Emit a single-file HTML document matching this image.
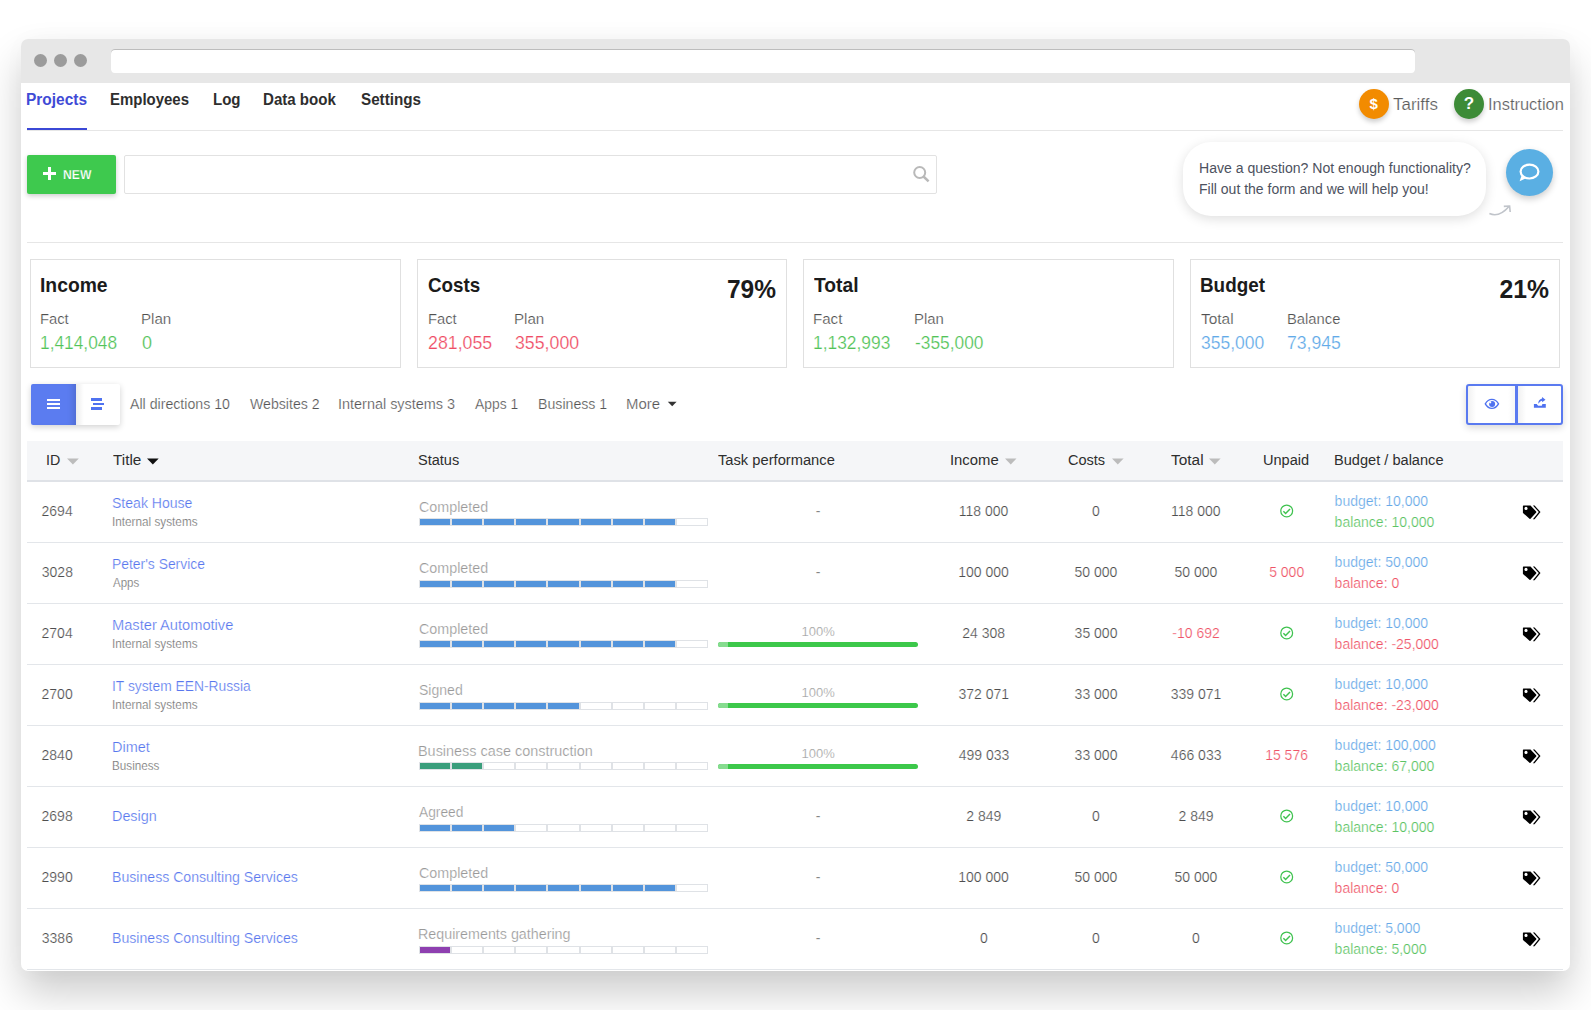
<!DOCTYPE html>
<html><head><meta charset="utf-8"><style>
html,body{margin:0;padding:0;background:#fff;width:1591px;height:1010px;overflow:hidden;position:relative;}
.t{position:absolute;white-space:nowrap;font-family:"Liberation Sans", sans-serif;}
.r{position:absolute;}
.lt{-webkit-text-stroke:0.22px #fff;}
</style></head><body>
<div class="r" style="left:21px;top:39px;width:1549px;height:932px;background:#fff;border-radius:7px;box-shadow:0 22px 40px rgba(0,0,0,0.2), 0 0 24px rgba(0,0,0,0.025);"></div>
<div class="r" style="left:21px;top:39px;width:1549px;height:44px;background:#e7e7e7;border-radius:7px 7px 0 0;"></div>
<div class="r" style="left:34.1px;top:54.2px;width:13.0px;height:13.0px;background:#9b9b9b;border-radius:50%;"></div>
<div class="r" style="left:54.1px;top:54.2px;width:12.999999999999993px;height:13.0px;background:#9b9b9b;border-radius:50%;"></div>
<div class="r" style="left:74.1px;top:54.2px;width:13.0px;height:13.0px;background:#9b9b9b;border-radius:50%;"></div>
<div class="r" style="left:111px;top:49px;width:1304px;height:24px;background:#fff;border-radius:4px;box-shadow:inset 0 1px 0 #bdbdbd;"></div>
<div class="t" style="left:26.13px;top:91.66px;font-size:16px;line-height:16px;color:#3f4bd6;font-weight:bold;transform:scaleX(0.9659);transform-origin:0 0;">Projects</div>
<div class="t" style="left:110.06px;top:91.66px;font-size:16px;line-height:16px;color:#2e2e2e;font-weight:bold;transform:scaleX(0.9353);transform-origin:0 0;">Employees</div>
<div class="t" style="left:213.06px;top:91.66px;font-size:16px;line-height:16px;color:#2e2e2e;font-weight:bold;transform:scaleX(0.9394);transform-origin:0 0;">Log</div>
<div class="t" style="left:263.26px;top:91.66px;font-size:16px;line-height:16px;color:#2e2e2e;font-weight:bold;transform:scaleX(0.9416);transform-origin:0 0;">Data book</div>
<div class="t" style="left:360.52px;top:91.66px;font-size:16px;line-height:16px;color:#2e2e2e;font-weight:bold;transform:scaleX(0.9516);transform-origin:0 0;">Settings</div>
<div class="r" style="left:27px;top:130px;width:1536px;height:1px;background:#e6e6e6;"></div>
<div class="r" style="left:27px;top:127.5px;width:60px;height:2.5px;background:#3b48d6;"></div>
<div class="r" style="left:1359px;top:89px;width:30px;height:30px;background:#f28b00;border-radius:50%;box-shadow:0 3px 5px rgba(0,0,0,0.2);"></div>
<div class="t" style="left:1073.75px;width:600px;text-align:center;top:95.50px;font-size:15px;line-height:15px;color:#fff;font-weight:bold;">$</div>
<div class="t lt" style="left:1393.14px;top:95.73px;font-size:16.5px;line-height:16.5px;color:#5c5c5c;font-weight:normal;transform:scaleX(1.0292);transform-origin:0 0;">Tariffs</div>
<div class="r" style="left:1454px;top:89px;width:30px;height:30px;background:#3d8b37;border-radius:50%;box-shadow:0 3px 5px rgba(0,0,0,0.2);"></div>
<div class="t" style="left:1169.07px;width:600px;text-align:center;top:95.41px;font-size:17px;line-height:17px;color:#fff;font-weight:bold;">?</div>
<div class="t lt" style="left:1487.61px;top:95.73px;font-size:16.5px;line-height:16.5px;color:#5c5c5c;font-weight:normal;transform:scaleX(0.9959);transform-origin:0 0;">Instruction</div>
<div class="r" style="left:27px;top:155px;width:89px;height:39px;background:#3ec94e;border-radius:2px;box-shadow:0 2px 5px rgba(0,0,0,0.2);"></div>
<div class="r" style="left:42.6px;top:172.3px;width:13.100000000000001px;height:3.0px;background:#fff;"></div>
<div class="r" style="left:47.6px;top:167.3px;width:3.0px;height:13.0px;background:#fff;"></div>
<div class="t" style="left:63.30px;top:168.30px;font-size:13px;line-height:13px;color:#fff;font-weight:bold;transform:scaleX(0.9356);transform-origin:0 0;-webkit-text-stroke:0.25px #3ec94e;">NEW</div>
<div class="r" style="left:124.4px;top:155.2px;width:812.4px;height:38.70000000000002px;border:1px solid #e2e2e2;border-radius:2px;box-sizing:border-box;background:#fff;"></div>
<svg class="r" style="left:910px;top:163px" width="22" height="22" viewBox="910 163 22 22"><circle cx="919.7" cy="172.5" r="5.5" fill="none" stroke="#b9b9b9" stroke-width="2"/><line x1="923.5" y1="176.5" x2="928.6" y2="181.3" stroke="#b9b9b9" stroke-width="2.5"/></svg>
<div class="r" style="left:1183px;top:142px;width:303px;height:74px;background:#fff;border-radius:28px;box-shadow:0 3px 12px rgba(0,0,0,0.13);"></div>
<div class="t" style="left:1199.05px;top:161.35px;font-size:14px;line-height:14px;color:#4d5260;font-weight:normal;transform:scaleX(1.0037);transform-origin:0 0;">Have a question? Not enough functionality?</div>
<div class="t" style="left:1199.05px;top:182.25px;font-size:14px;line-height:14px;color:#4d5260;font-weight:normal;">Fill out the form and we will help you!</div>
<div class="r" style="left:1505.8px;top:148.9px;width:47.299999999999955px;height:47.099999999999994px;background:#5aafe3;border-radius:50%;box-shadow:0 3px 7px rgba(0,0,0,0.2);"></div>
<svg class="r" style="left:1510px;top:155px" width="40" height="35" viewBox="1510 155 40 35"><ellipse cx="1529.5" cy="171.6" rx="8.9" ry="6.9" fill="none" stroke="#fff" stroke-width="2.2"/><path d="M1521.6 175.6 L1519.6 181.2 L1526.2 178.2 Z" fill="#fff"/></svg>
<svg class="r" style="left:1485px;top:200px" width="30" height="20" viewBox="1485 200 30 20"><path d="M1489.4 213.5 Q1499 218 1509.2 206.2" fill="none" stroke="#c0c4ca" stroke-width="1.6"/><path d="M1503.8 206.4 L1509.6 206 L1510.2 212" fill="none" stroke="#c0c4ca" stroke-width="1.6"/></svg>
<div class="r" style="left:27px;top:242px;width:1536px;height:1px;background:#e6e6e6;"></div>
<div class="r" style="left:30px;top:259.3px;width:371px;height:108.69999999999999px;border:1px solid #e0e0e0;box-sizing:border-box;"></div>
<div class="t" style="left:40.32px;top:274.55px;font-size:20.5px;line-height:20.5px;color:#1b1b1b;font-weight:bold;transform:scaleX(0.9419);transform-origin:0 0;">Income</div>
<div class="t lt" style="left:40.17px;top:311.20px;font-size:15px;line-height:15px;color:#505050;font-weight:normal;transform:scaleX(0.9838);transform-origin:0 0;">Fact</div>
<div class="t lt" style="left:40.20px;top:333.56px;font-size:18px;line-height:18px;color:#52c358;font-weight:normal;transform:scaleX(0.9628);transform-origin:0 0;">1,414,048</div>
<div class="t lt" style="left:141.44px;top:311.20px;font-size:15px;line-height:15px;color:#505050;font-weight:normal;transform:scaleX(1.0090);transform-origin:0 0;">Plan</div>
<div class="t lt" style="left:141.95px;top:333.56px;font-size:18px;line-height:18px;color:#52c358;font-weight:normal;">0</div>
<div class="r" style="left:417.4px;top:259.3px;width:369.6px;height:108.69999999999999px;border:1px solid #e0e0e0;box-sizing:border-box;"></div>
<div class="t" style="left:428.21px;top:274.55px;font-size:20.5px;line-height:20.5px;color:#1b1b1b;font-weight:bold;transform:scaleX(0.9176);transform-origin:0 0;">Costs</div>
<div class="t" style="left:176.25px;width:600px;text-align:right;top:276.39px;font-size:26px;line-height:26px;color:#1b1b1b;font-weight:bold;transform:scaleX(0.9413);transform-origin:100% 0;">79%</div>
<div class="t lt" style="left:427.57px;top:311.20px;font-size:15px;line-height:15px;color:#505050;font-weight:normal;transform:scaleX(0.9838);transform-origin:0 0;">Fact</div>
<div class="t lt" style="left:427.81px;top:333.56px;font-size:18px;line-height:18px;color:#ef4c64;font-weight:normal;transform:scaleX(0.9866);transform-origin:0 0;">281,055</div>
<div class="t lt" style="left:514.14px;top:311.20px;font-size:15px;line-height:15px;color:#505050;font-weight:normal;transform:scaleX(1.0090);transform-origin:0 0;">Plan</div>
<div class="t lt" style="left:514.66px;top:333.56px;font-size:18px;line-height:18px;color:#ef4c64;font-weight:normal;transform:scaleX(0.9858);transform-origin:0 0;">355,000</div>
<div class="r" style="left:803px;top:259.3px;width:371px;height:108.69999999999999px;border:1px solid #e0e0e0;box-sizing:border-box;"></div>
<div class="t" style="left:814.27px;top:274.55px;font-size:20.5px;line-height:20.5px;color:#1b1b1b;font-weight:bold;transform:scaleX(0.9399);transform-origin:0 0;">Total</div>
<div class="t lt" style="left:813.14px;top:311.20px;font-size:15px;line-height:15px;color:#505050;font-weight:normal;transform:scaleX(1.0054);transform-origin:0 0;">Fact</div>
<div class="t lt" style="left:813.19px;top:333.56px;font-size:18px;line-height:18px;color:#52c358;font-weight:normal;transform:scaleX(0.9654);transform-origin:0 0;">1,132,993</div>
<div class="t lt" style="left:914.16px;top:311.20px;font-size:15px;line-height:15px;color:#505050;font-weight:normal;transform:scaleX(0.9946);transform-origin:0 0;">Plan</div>
<div class="t lt" style="left:914.68px;top:333.56px;font-size:18px;line-height:18px;color:#52c358;font-weight:normal;transform:scaleX(0.9626);transform-origin:0 0;">-355,000</div>
<div class="r" style="left:1190px;top:259.3px;width:370px;height:108.69999999999999px;border:1px solid #e0e0e0;box-sizing:border-box;"></div>
<div class="t" style="left:1200.35px;top:274.55px;font-size:20.5px;line-height:20.5px;color:#1b1b1b;font-weight:bold;transform:scaleX(0.9203);transform-origin:0 0;">Budget</div>
<div class="t" style="left:949.26px;width:600px;text-align:right;top:276.39px;font-size:26px;line-height:26px;color:#1b1b1b;font-weight:bold;transform:scaleX(0.9512);transform-origin:100% 0;">21%</div>
<div class="t lt" style="left:1201.14px;top:311.20px;font-size:15px;line-height:15px;color:#505050;font-weight:normal;transform:scaleX(1.0295);transform-origin:0 0;">Total</div>
<div class="t lt" style="left:1200.67px;top:333.56px;font-size:18px;line-height:18px;color:#62aae8;font-weight:normal;transform:scaleX(0.9701);transform-origin:0 0;">355,000</div>
<div class="t lt" style="left:1286.87px;top:311.20px;font-size:15px;line-height:15px;color:#505050;font-weight:normal;transform:scaleX(0.9856);transform-origin:0 0;">Balance</div>
<div class="t lt" style="left:1287.12px;top:333.56px;font-size:18px;line-height:18px;color:#62aae8;font-weight:normal;transform:scaleX(0.9784);transform-origin:0 0;">73,945</div>
<div class="r" style="left:31px;top:384px;width:89px;height:41px;background:#fff;border-radius:2px;box-shadow:0 2px 6px rgba(0,0,0,0.18);"></div>
<div class="r" style="left:31px;top:384px;width:45px;height:41px;background:#5b7cf0;border-radius:2px 0 0 2px;box-shadow:inset -7px 0 6px -4px rgba(0,0,0,0.13);"></div>
<div class="r" style="left:76px;top:384px;width:8px;height:41px;background:linear-gradient(to right, rgba(0,0,0,0.07), rgba(0,0,0,0));"></div>
<div class="r" style="left:47px;top:398.8px;width:2.6000000000000014px;height:2.3999999999999773px;background:#fff;"></div>
<div class="r" style="left:50.2px;top:398.8px;width:10.299999999999997px;height:2.3999999999999773px;background:#fff;"></div>
<div class="r" style="left:47px;top:403px;width:2.6000000000000014px;height:2.3999999999999773px;background:#fff;"></div>
<div class="r" style="left:50.2px;top:403px;width:10.299999999999997px;height:2.3999999999999773px;background:#fff;"></div>
<div class="r" style="left:47px;top:407.1px;width:2.6000000000000014px;height:2.3999999999999773px;background:#fff;"></div>
<div class="r" style="left:50.2px;top:407.1px;width:10.299999999999997px;height:2.3999999999999773px;background:#fff;"></div>
<div class="r" style="left:91px;top:398.3px;width:11.299999999999997px;height:2.5px;background:#4f72f0;"></div>
<div class="r" style="left:92.8px;top:403px;width:11.200000000000003px;height:2.3999999999999773px;background:#4f72f0;"></div>
<div class="r" style="left:91px;top:407.3px;width:11.299999999999997px;height:2.5px;background:#4f72f0;"></div>
<div class="t lt" style="left:130.10px;top:397.15px;font-size:14px;line-height:14px;color:#545454;font-weight:normal;transform:scaleX(1.0107);transform-origin:0 0;">All directions 10</div>
<div class="t lt" style="left:250.15px;top:397.15px;font-size:14px;line-height:14px;color:#545454;font-weight:normal;transform:scaleX(1.0088);transform-origin:0 0;">Websites 2</div>
<div class="t lt" style="left:338.31px;top:397.15px;font-size:14px;line-height:14px;color:#545454;font-weight:normal;transform:scaleX(1.0309);transform-origin:0 0;">Internal systems 3</div>
<div class="t lt" style="left:475.40px;top:397.15px;font-size:14px;line-height:14px;color:#545454;font-weight:normal;transform:scaleX(0.9907);transform-origin:0 0;">Apps 1</div>
<div class="t lt" style="left:538.34px;top:397.15px;font-size:14px;line-height:14px;color:#545454;font-weight:normal;transform:scaleX(1.0105);transform-origin:0 0;">Business 1</div>
<div class="t lt" style="left:626.47px;top:397.15px;font-size:14px;line-height:14px;color:#545454;font-weight:normal;transform:scaleX(1.0667);transform-origin:0 0;">More</div>
<svg class="r" style="left:667px;top:401px" width="11" height="6" viewBox="0 0 11 6"><path d="M0.8 0.8 L9.6 0.8 L5.2 5.2 Z" fill="#333"/></svg>
<div class="r" style="left:1466px;top:384px;width:97px;height:41px;border:2px solid #5a7af0;border-radius:3px;box-sizing:border-box;box-shadow:0 3px 7px rgba(0,0,0,0.15);background:#fff;"></div>
<div class="r" style="left:1468px;top:386px;width:8px;height:37px;background:linear-gradient(to right, rgba(0,0,0,0.06), rgba(0,0,0,0));"></div>
<div class="r" style="left:1517.8px;top:386px;width:8.0px;height:37px;background:linear-gradient(to right, rgba(0,0,0,0.06), rgba(0,0,0,0));"></div>
<div class="r" style="left:1508px;top:386px;width:7.2000000000000455px;height:37px;background:linear-gradient(to left, rgba(0,0,0,0.035), rgba(0,0,0,0));"></div>
<div class="r" style="left:1515.2px;top:384px;width:2.599999999999909px;height:41px;background:#5a7af0;"></div>
<svg class="r" style="left:1482px;top:396px" width="20" height="16" viewBox="1482 396 20 16"><path d="M1485.3 403.8 C1487.1 400.6 1489.5 399.4 1491.9 399.4 C1494.3 399.4 1496.7 400.6 1498.5 403.8 C1496.7 407 1494.3 408.3 1491.9 408.3 C1489.5 408.3 1487.1 407 1485.3 403.8 Z" fill="none" stroke="#4f72f0" stroke-width="1.35"/><circle cx="1492.1" cy="404.1" r="3" fill="#4f72f0"/><circle cx="1490.2" cy="402.3" r="1.1" fill="#fff"/></svg>
<svg class="r" style="left:1530px;top:394px" width="20" height="16" viewBox="1530 394 20 16"><path d="M1533.9 403.9 L1536.7 403.9 L1538.1 405.8 L1541.8 405.8 L1542.4 403.9 L1545.8 403.9 L1545.8 407.8 L1533.9 407.8 Z" fill="#4f72f0"/><path d="M1538.2 403.8 C1538.3 401 1539.5 399 1542.1 398.5 L1542.1 396.9 L1545.5 399.8 L1542.1 402.3 L1542.1 400.7 C1540.6 400.9 1539.5 402 1538.2 403.8 Z" fill="#4f72f0"/></svg>
<div class="r" style="left:27px;top:441px;width:1536px;height:39px;background:#f5f6f8;"></div>
<div class="r" style="left:27px;top:480px;width:1536px;height:2px;background:#dfe2e7;"></div>
<div class="t" style="left:45.93px;top:453.15px;font-size:14px;line-height:14px;color:#2e2e2e;font-weight:normal;transform:scaleX(1.0167);transform-origin:0 0;">ID</div>
<div class="t" style="left:112.83px;top:453.15px;font-size:14px;line-height:14px;color:#2e2e2e;font-weight:normal;transform:scaleX(1.0920);transform-origin:0 0;">Title</div>
<div class="t" style="left:418.22px;top:453.15px;font-size:14px;line-height:14px;color:#2e2e2e;font-weight:normal;transform:scaleX(1.0390);transform-origin:0 0;">Status</div>
<div class="t" style="left:717.74px;top:453.15px;font-size:14px;line-height:14px;color:#2e2e2e;font-weight:normal;transform:scaleX(1.0498);transform-origin:0 0;">Task performance</div>
<div class="t" style="left:949.58px;top:453.15px;font-size:14px;line-height:14px;color:#2e2e2e;font-weight:normal;transform:scaleX(1.0591);transform-origin:0 0;">Income</div>
<div class="t" style="left:1068.02px;top:453.15px;font-size:14px;line-height:14px;color:#2e2e2e;font-weight:normal;transform:scaleX(1.0377);transform-origin:0 0;">Costs</div>
<div class="t" style="left:1171.12px;top:453.15px;font-size:14px;line-height:14px;color:#2e2e2e;font-weight:normal;transform:scaleX(1.1009);transform-origin:0 0;">Total</div>
<div class="t" style="left:1263.46px;top:453.15px;font-size:14px;line-height:14px;color:#2e2e2e;font-weight:normal;transform:scaleX(1.0400);transform-origin:0 0;">Unpaid</div>
<div class="t" style="left:1334.20px;top:453.15px;font-size:14px;line-height:14px;color:#2e2e2e;font-weight:normal;transform:scaleX(1.0421);transform-origin:0 0;">Budget / balance</div>
<svg class="r" style="left:67px;top:457.5px" width="11.8" height="7" viewBox="0 0 11.8 7"><path d="M0 0.5 L11.8 0.5 L5.90 6.5 Z" fill="#bcbcbc"/></svg>
<svg class="r" style="left:147.2px;top:457.5px" width="11.7" height="7" viewBox="0 0 11.7 7"><path d="M0 0.5 L11.7 0.5 L5.85 6.5 Z" fill="#111"/></svg>
<svg class="r" style="left:1005.4px;top:457.5px" width="11.5" height="7" viewBox="0 0 11.5 7"><path d="M0 0.5 L11.5 0.5 L5.75 6.5 Z" fill="#bcbcbc"/></svg>
<svg class="r" style="left:1112px;top:457.5px" width="11.6" height="7" viewBox="0 0 11.6 7"><path d="M0 0.5 L11.6 0.5 L5.80 6.5 Z" fill="#bcbcbc"/></svg>
<svg class="r" style="left:1209.2px;top:457.5px" width="11.6" height="7" viewBox="0 0 11.6 7"><path d="M0 0.5 L11.6 0.5 L5.80 6.5 Z" fill="#bcbcbc"/></svg>
<div class="r" style="left:27px;top:542px;width:1536px;height:1px;background:#e3e6ea;"></div>
<div class="t lt" style="left:41.55px;top:503.95px;font-size:14px;line-height:14px;color:#4e4e4e;font-weight:normal;">2694</div>
<div class="t lt" style="left:112.35px;top:495.55px;font-size:14px;line-height:14px;color:#5877ee;font-weight:normal;transform:scaleX(1.0032);transform-origin:0 0;">Steak House</div>
<div class="t lt" style="left:112.12px;top:515.64px;font-size:12px;line-height:12px;color:#6c6c6c;font-weight:normal;transform:scaleX(0.9791);transform-origin:0 0;">Internal systems</div>
<div class="t lt" style="left:418.63px;top:499.95px;font-size:14px;line-height:14px;color:#999999;font-weight:normal;transform:scaleX(1.0227);transform-origin:0 0;">Completed</div>
<div class="r" style="left:419px;top:518px;width:32px;height:8px;border:1px solid #dfe2e6;box-sizing:border-box;background:#5394db;"></div>
<div class="r" style="left:451px;top:518px;width:32px;height:8px;border:1px solid #dfe2e6;box-sizing:border-box;background:#5394db;"></div>
<div class="r" style="left:483px;top:518px;width:32px;height:8px;border:1px solid #dfe2e6;box-sizing:border-box;background:#5394db;"></div>
<div class="r" style="left:515px;top:518px;width:32px;height:8px;border:1px solid #dfe2e6;box-sizing:border-box;background:#5394db;"></div>
<div class="r" style="left:547px;top:518px;width:33px;height:8px;border:1px solid #dfe2e6;box-sizing:border-box;background:#5394db;"></div>
<div class="r" style="left:580px;top:518px;width:32px;height:8px;border:1px solid #dfe2e6;box-sizing:border-box;background:#5394db;"></div>
<div class="r" style="left:612px;top:518px;width:32px;height:8px;border:1px solid #dfe2e6;box-sizing:border-box;background:#5394db;"></div>
<div class="r" style="left:644px;top:518px;width:32px;height:8px;border:1px solid #dfe2e6;box-sizing:border-box;background:#5394db;"></div>
<div class="r" style="left:676px;top:518px;width:32px;height:8px;border:1px solid #dfe2e6;box-sizing:border-box;background:#fff;"></div>
<div class="t lt" style="left:518.09px;width:600px;text-align:center;top:504.15px;font-size:14px;line-height:14px;color:#4e4e4e;font-weight:normal;">-</div>
<div class="t lt" style="left:683.59px;width:600px;text-align:center;top:504.15px;font-size:14px;line-height:14px;color:#4e4e4e;font-weight:normal;">118 000</div>
<div class="t lt" style="left:796.02px;width:600px;text-align:center;top:504.15px;font-size:14px;line-height:14px;color:#4e4e4e;font-weight:normal;">0</div>
<div class="t lt" style="left:895.79px;width:600px;text-align:center;top:504.15px;font-size:14px;line-height:14px;color:#4e4e4e;font-weight:normal;">118 000</div>
<svg class="r" style="left:1278px;top:502.5px" width="18" height="18" viewBox="0 0 18 18"><circle cx="8.7" cy="7.9" r="5.9" fill="none" stroke="#3fc24f" stroke-width="1.25"/><path d="M5.4 8.3 L7.6 10.5 L12 6" fill="none" stroke="#3fc24f" stroke-width="1.45"/></svg>
<div class="t lt" style="left:1334.60px;top:494.15px;font-size:14px;line-height:14px;color:#68a9e8;font-weight:normal;transform:scaleX(1.0000);transform-origin:0 0;">budget: 10,000</div>
<div class="t lt" style="left:1334.60px;top:515.05px;font-size:14px;line-height:14px;color:#5cc464;font-weight:normal;transform:scaleX(1.0000);transform-origin:0 0;">balance: 10,000</div>
<svg class="r" style="left:1521px;top:503.5px" width="22" height="17" viewBox="0 0 22 17"><path d="M1.9 2.1 Q1.9 1.5 2.5 1.5 L9.5 1.5 L15.2 7.5 Q15.6 8.1 15.2 8.6 L9.5 14.8 Q9 15.2 8.5 14.8 L2.3 9.2 Q1.9 8.9 1.9 8.4 Z" fill="#000"/><circle cx="5" cy="4.4" r="1.55" fill="#fff"/><path d="M11.9 1.5 L13.6 1.5 L19.5 8.1 L13.6 15.2 L11.9 15.2 L17.8 8.1 Z" fill="#000"/></svg>
<div class="r" style="left:27px;top:603px;width:1536px;height:1px;background:#e3e6ea;"></div>
<div class="t lt" style="left:41.80px;top:564.95px;font-size:14px;line-height:14px;color:#4e4e4e;font-weight:normal;">3028</div>
<div class="t lt" style="left:111.86px;top:556.55px;font-size:14px;line-height:14px;color:#5877ee;font-weight:normal;transform:scaleX(0.9918);transform-origin:0 0;">Peter's Service</div>
<div class="t lt" style="left:113.10px;top:576.64px;font-size:12px;line-height:12px;color:#6c6c6c;font-weight:normal;transform:scaleX(0.9593);transform-origin:0 0;">Apps</div>
<div class="t lt" style="left:418.63px;top:560.95px;font-size:14px;line-height:14px;color:#999999;font-weight:normal;transform:scaleX(1.0227);transform-origin:0 0;">Completed</div>
<div class="r" style="left:419px;top:580px;width:32px;height:8px;border:1px solid #dfe2e6;box-sizing:border-box;background:#5394db;"></div>
<div class="r" style="left:451px;top:580px;width:32px;height:8px;border:1px solid #dfe2e6;box-sizing:border-box;background:#5394db;"></div>
<div class="r" style="left:483px;top:580px;width:32px;height:8px;border:1px solid #dfe2e6;box-sizing:border-box;background:#5394db;"></div>
<div class="r" style="left:515px;top:580px;width:32px;height:8px;border:1px solid #dfe2e6;box-sizing:border-box;background:#5394db;"></div>
<div class="r" style="left:547px;top:580px;width:33px;height:8px;border:1px solid #dfe2e6;box-sizing:border-box;background:#5394db;"></div>
<div class="r" style="left:580px;top:580px;width:32px;height:8px;border:1px solid #dfe2e6;box-sizing:border-box;background:#5394db;"></div>
<div class="r" style="left:612px;top:580px;width:32px;height:8px;border:1px solid #dfe2e6;box-sizing:border-box;background:#5394db;"></div>
<div class="r" style="left:644px;top:580px;width:32px;height:8px;border:1px solid #dfe2e6;box-sizing:border-box;background:#5394db;"></div>
<div class="r" style="left:676px;top:580px;width:32px;height:8px;border:1px solid #dfe2e6;box-sizing:border-box;background:#fff;"></div>
<div class="t lt" style="left:518.09px;width:600px;text-align:center;top:565.15px;font-size:14px;line-height:14px;color:#4e4e4e;font-weight:normal;">-</div>
<div class="t lt" style="left:683.60px;width:600px;text-align:center;top:565.15px;font-size:14px;line-height:14px;color:#4e4e4e;font-weight:normal;">100 000</div>
<div class="t lt" style="left:795.91px;width:600px;text-align:center;top:565.15px;font-size:14px;line-height:14px;color:#4e4e4e;font-weight:normal;">50 000</div>
<div class="t lt" style="left:895.91px;width:600px;text-align:center;top:565.15px;font-size:14px;line-height:14px;color:#4e4e4e;font-weight:normal;">50 000</div>
<div class="t lt" style="left:986.70px;width:600px;text-align:center;top:565.15px;font-size:14px;line-height:14px;color:#ef5468;font-weight:normal;">5 000</div>
<div class="t lt" style="left:1334.60px;top:555.15px;font-size:14px;line-height:14px;color:#68a9e8;font-weight:normal;transform:scaleX(1.0000);transform-origin:0 0;">budget: 50,000</div>
<div class="t lt" style="left:1334.60px;top:576.05px;font-size:14px;line-height:14px;color:#ef5468;font-weight:normal;transform:scaleX(1.0000);transform-origin:0 0;">balance: 0</div>
<svg class="r" style="left:1521px;top:564.5px" width="22" height="17" viewBox="0 0 22 17"><path d="M1.9 2.1 Q1.9 1.5 2.5 1.5 L9.5 1.5 L15.2 7.5 Q15.6 8.1 15.2 8.6 L9.5 14.8 Q9 15.2 8.5 14.8 L2.3 9.2 Q1.9 8.9 1.9 8.4 Z" fill="#000"/><circle cx="5" cy="4.4" r="1.55" fill="#fff"/><path d="M11.9 1.5 L13.6 1.5 L19.5 8.1 L13.6 15.2 L11.9 15.2 L17.8 8.1 Z" fill="#000"/></svg>
<div class="r" style="left:27px;top:664px;width:1536px;height:1px;background:#e3e6ea;"></div>
<div class="t lt" style="left:41.55px;top:625.95px;font-size:14px;line-height:14px;color:#4e4e4e;font-weight:normal;">2704</div>
<div class="t lt" style="left:111.79px;top:617.55px;font-size:14px;line-height:14px;color:#5877ee;font-weight:normal;transform:scaleX(1.0465);transform-origin:0 0;">Master Automotive</div>
<div class="t lt" style="left:112.12px;top:637.64px;font-size:12px;line-height:12px;color:#6c6c6c;font-weight:normal;transform:scaleX(0.9791);transform-origin:0 0;">Internal systems</div>
<div class="t lt" style="left:418.63px;top:621.95px;font-size:14px;line-height:14px;color:#999999;font-weight:normal;transform:scaleX(1.0227);transform-origin:0 0;">Completed</div>
<div class="r" style="left:419px;top:640px;width:32px;height:8px;border:1px solid #dfe2e6;box-sizing:border-box;background:#5394db;"></div>
<div class="r" style="left:451px;top:640px;width:32px;height:8px;border:1px solid #dfe2e6;box-sizing:border-box;background:#5394db;"></div>
<div class="r" style="left:483px;top:640px;width:32px;height:8px;border:1px solid #dfe2e6;box-sizing:border-box;background:#5394db;"></div>
<div class="r" style="left:515px;top:640px;width:32px;height:8px;border:1px solid #dfe2e6;box-sizing:border-box;background:#5394db;"></div>
<div class="r" style="left:547px;top:640px;width:33px;height:8px;border:1px solid #dfe2e6;box-sizing:border-box;background:#5394db;"></div>
<div class="r" style="left:580px;top:640px;width:32px;height:8px;border:1px solid #dfe2e6;box-sizing:border-box;background:#5394db;"></div>
<div class="r" style="left:612px;top:640px;width:32px;height:8px;border:1px solid #dfe2e6;box-sizing:border-box;background:#5394db;"></div>
<div class="r" style="left:644px;top:640px;width:32px;height:8px;border:1px solid #dfe2e6;box-sizing:border-box;background:#5394db;"></div>
<div class="r" style="left:676px;top:640px;width:32px;height:8px;border:1px solid #dfe2e6;box-sizing:border-box;background:#fff;"></div>
<div class="t lt" style="left:518.15px;width:600px;text-align:center;top:624.70px;font-size:13px;line-height:13px;color:#a0a0a0;font-weight:normal;">100%</div>
<div class="r" style="left:718px;top:641.9px;width:200px;height:5.100000000000023px;background:#3cc84a;border-radius:3px;overflow:hidden;"></div>
<div class="r" style="left:718px;top:641.9px;width:10px;height:5.100000000000023px;background:#86dc8f;border-radius:3px 0 0 3px;"></div>
<div class="t lt" style="left:683.71px;width:600px;text-align:center;top:626.15px;font-size:14px;line-height:14px;color:#4e4e4e;font-weight:normal;">24 308</div>
<div class="t lt" style="left:796.04px;width:600px;text-align:center;top:626.15px;font-size:14px;line-height:14px;color:#4e4e4e;font-weight:normal;">35 000</div>
<div class="t lt" style="left:896.12px;width:600px;text-align:center;top:626.15px;font-size:14px;line-height:14px;color:#ef5468;font-weight:normal;">-10 692</div>
<svg class="r" style="left:1278px;top:624.5px" width="18" height="18" viewBox="0 0 18 18"><circle cx="8.7" cy="7.9" r="5.9" fill="none" stroke="#3fc24f" stroke-width="1.25"/><path d="M5.4 8.3 L7.6 10.5 L12 6" fill="none" stroke="#3fc24f" stroke-width="1.45"/></svg>
<div class="t lt" style="left:1334.60px;top:616.15px;font-size:14px;line-height:14px;color:#68a9e8;font-weight:normal;transform:scaleX(1.0000);transform-origin:0 0;">budget: 10,000</div>
<div class="t lt" style="left:1334.60px;top:637.05px;font-size:14px;line-height:14px;color:#ef5468;font-weight:normal;transform:scaleX(1.0000);transform-origin:0 0;">balance: -25,000</div>
<svg class="r" style="left:1521px;top:625.5px" width="22" height="17" viewBox="0 0 22 17"><path d="M1.9 2.1 Q1.9 1.5 2.5 1.5 L9.5 1.5 L15.2 7.5 Q15.6 8.1 15.2 8.6 L9.5 14.8 Q9 15.2 8.5 14.8 L2.3 9.2 Q1.9 8.9 1.9 8.4 Z" fill="#000"/><circle cx="5" cy="4.4" r="1.55" fill="#fff"/><path d="M11.9 1.5 L13.6 1.5 L19.5 8.1 L13.6 15.2 L11.9 15.2 L17.8 8.1 Z" fill="#000"/></svg>
<div class="r" style="left:27px;top:725px;width:1536px;height:1px;background:#e3e6ea;"></div>
<div class="t lt" style="left:41.55px;top:686.95px;font-size:14px;line-height:14px;color:#4e4e4e;font-weight:normal;">2700</div>
<div class="t lt" style="left:111.87px;top:678.55px;font-size:14px;line-height:14px;color:#5877ee;font-weight:normal;transform:scaleX(0.9874);transform-origin:0 0;">IT system EEN-Russia</div>
<div class="t lt" style="left:112.12px;top:698.64px;font-size:12px;line-height:12px;color:#6c6c6c;font-weight:normal;transform:scaleX(0.9791);transform-origin:0 0;">Internal systems</div>
<div class="t lt" style="left:418.65px;top:682.95px;font-size:14px;line-height:14px;color:#999999;font-weight:normal;transform:scaleX(1.0024);transform-origin:0 0;">Signed</div>
<div class="r" style="left:419px;top:702px;width:32px;height:8px;border:1px solid #dfe2e6;box-sizing:border-box;background:#5394db;"></div>
<div class="r" style="left:451px;top:702px;width:32px;height:8px;border:1px solid #dfe2e6;box-sizing:border-box;background:#5394db;"></div>
<div class="r" style="left:483px;top:702px;width:32px;height:8px;border:1px solid #dfe2e6;box-sizing:border-box;background:#5394db;"></div>
<div class="r" style="left:515px;top:702px;width:32px;height:8px;border:1px solid #dfe2e6;box-sizing:border-box;background:#5394db;"></div>
<div class="r" style="left:547px;top:702px;width:33px;height:8px;border:1px solid #dfe2e6;box-sizing:border-box;background:#5394db;"></div>
<div class="r" style="left:580px;top:702px;width:32px;height:8px;border:1px solid #dfe2e6;box-sizing:border-box;background:#fff;"></div>
<div class="r" style="left:612px;top:702px;width:32px;height:8px;border:1px solid #dfe2e6;box-sizing:border-box;background:#fff;"></div>
<div class="r" style="left:644px;top:702px;width:32px;height:8px;border:1px solid #dfe2e6;box-sizing:border-box;background:#fff;"></div>
<div class="r" style="left:676px;top:702px;width:32px;height:8px;border:1px solid #dfe2e6;box-sizing:border-box;background:#fff;"></div>
<div class="t lt" style="left:518.15px;width:600px;text-align:center;top:685.70px;font-size:13px;line-height:13px;color:#a0a0a0;font-weight:normal;">100%</div>
<div class="r" style="left:718px;top:702.9px;width:200px;height:5.100000000000023px;background:#3cc84a;border-radius:3px;overflow:hidden;"></div>
<div class="r" style="left:718px;top:702.9px;width:10px;height:5.100000000000023px;background:#86dc8f;border-radius:3px 0 0 3px;"></div>
<div class="t lt" style="left:683.85px;width:600px;text-align:center;top:687.15px;font-size:14px;line-height:14px;color:#4e4e4e;font-weight:normal;">372 071</div>
<div class="t lt" style="left:796.04px;width:600px;text-align:center;top:687.15px;font-size:14px;line-height:14px;color:#4e4e4e;font-weight:normal;">33 000</div>
<div class="t lt" style="left:896.05px;width:600px;text-align:center;top:687.15px;font-size:14px;line-height:14px;color:#4e4e4e;font-weight:normal;">339 071</div>
<svg class="r" style="left:1278px;top:685.5px" width="18" height="18" viewBox="0 0 18 18"><circle cx="8.7" cy="7.9" r="5.9" fill="none" stroke="#3fc24f" stroke-width="1.25"/><path d="M5.4 8.3 L7.6 10.5 L12 6" fill="none" stroke="#3fc24f" stroke-width="1.45"/></svg>
<div class="t lt" style="left:1334.60px;top:677.15px;font-size:14px;line-height:14px;color:#68a9e8;font-weight:normal;transform:scaleX(1.0000);transform-origin:0 0;">budget: 10,000</div>
<div class="t lt" style="left:1334.60px;top:698.05px;font-size:14px;line-height:14px;color:#ef5468;font-weight:normal;transform:scaleX(1.0000);transform-origin:0 0;">balance: -23,000</div>
<svg class="r" style="left:1521px;top:686.5px" width="22" height="17" viewBox="0 0 22 17"><path d="M1.9 2.1 Q1.9 1.5 2.5 1.5 L9.5 1.5 L15.2 7.5 Q15.6 8.1 15.2 8.6 L9.5 14.8 Q9 15.2 8.5 14.8 L2.3 9.2 Q1.9 8.9 1.9 8.4 Z" fill="#000"/><circle cx="5" cy="4.4" r="1.55" fill="#fff"/><path d="M11.9 1.5 L13.6 1.5 L19.5 8.1 L13.6 15.2 L11.9 15.2 L17.8 8.1 Z" fill="#000"/></svg>
<div class="r" style="left:27px;top:786px;width:1536px;height:1px;background:#e3e6ea;"></div>
<div class="t lt" style="left:41.55px;top:747.95px;font-size:14px;line-height:14px;color:#4e4e4e;font-weight:normal;">2840</div>
<div class="t lt" style="left:111.81px;top:739.55px;font-size:14px;line-height:14px;color:#5877ee;font-weight:normal;transform:scaleX(1.0326);transform-origin:0 0;">Dimet</div>
<div class="t lt" style="left:112.13px;top:759.64px;font-size:12px;line-height:12px;color:#6c6c6c;font-weight:normal;transform:scaleX(0.9735);transform-origin:0 0;">Business</div>
<div class="t lt" style="left:418.11px;top:743.95px;font-size:14px;line-height:14px;color:#999999;font-weight:normal;transform:scaleX(1.0299);transform-origin:0 0;">Business case construction</div>
<div class="r" style="left:419px;top:762px;width:32px;height:8px;border:1px solid #dfe2e6;box-sizing:border-box;background:#3a9e7c;"></div>
<div class="r" style="left:451px;top:762px;width:32px;height:8px;border:1px solid #dfe2e6;box-sizing:border-box;background:#3a9e7c;"></div>
<div class="r" style="left:483px;top:762px;width:32px;height:8px;border:1px solid #dfe2e6;box-sizing:border-box;background:#fff;"></div>
<div class="r" style="left:515px;top:762px;width:32px;height:8px;border:1px solid #dfe2e6;box-sizing:border-box;background:#fff;"></div>
<div class="r" style="left:547px;top:762px;width:33px;height:8px;border:1px solid #dfe2e6;box-sizing:border-box;background:#fff;"></div>
<div class="r" style="left:580px;top:762px;width:32px;height:8px;border:1px solid #dfe2e6;box-sizing:border-box;background:#fff;"></div>
<div class="r" style="left:612px;top:762px;width:32px;height:8px;border:1px solid #dfe2e6;box-sizing:border-box;background:#fff;"></div>
<div class="r" style="left:644px;top:762px;width:32px;height:8px;border:1px solid #dfe2e6;box-sizing:border-box;background:#fff;"></div>
<div class="r" style="left:676px;top:762px;width:32px;height:8px;border:1px solid #dfe2e6;box-sizing:border-box;background:#fff;"></div>
<div class="t lt" style="left:518.15px;width:600px;text-align:center;top:746.70px;font-size:13px;line-height:13px;color:#a0a0a0;font-weight:normal;">100%</div>
<div class="r" style="left:718px;top:763.9px;width:200px;height:5.100000000000023px;background:#3cc84a;border-radius:3px;overflow:hidden;"></div>
<div class="r" style="left:718px;top:763.9px;width:10px;height:5.100000000000023px;background:#86dc8f;border-radius:3px 0 0 3px;"></div>
<div class="t lt" style="left:683.98px;width:600px;text-align:center;top:748.15px;font-size:14px;line-height:14px;color:#4e4e4e;font-weight:normal;">499 033</div>
<div class="t lt" style="left:796.04px;width:600px;text-align:center;top:748.15px;font-size:14px;line-height:14px;color:#4e4e4e;font-weight:normal;">33 000</div>
<div class="t lt" style="left:896.18px;width:600px;text-align:center;top:748.15px;font-size:14px;line-height:14px;color:#4e4e4e;font-weight:normal;">466 033</div>
<div class="t lt" style="left:986.59px;width:600px;text-align:center;top:748.15px;font-size:14px;line-height:14px;color:#ef5468;font-weight:normal;">15 576</div>
<div class="t lt" style="left:1334.60px;top:738.15px;font-size:14px;line-height:14px;color:#68a9e8;font-weight:normal;transform:scaleX(1.0000);transform-origin:0 0;">budget: 100,000</div>
<div class="t lt" style="left:1334.60px;top:759.05px;font-size:14px;line-height:14px;color:#5cc464;font-weight:normal;transform:scaleX(1.0000);transform-origin:0 0;">balance: 67,000</div>
<svg class="r" style="left:1521px;top:747.5px" width="22" height="17" viewBox="0 0 22 17"><path d="M1.9 2.1 Q1.9 1.5 2.5 1.5 L9.5 1.5 L15.2 7.5 Q15.6 8.1 15.2 8.6 L9.5 14.8 Q9 15.2 8.5 14.8 L2.3 9.2 Q1.9 8.9 1.9 8.4 Z" fill="#000"/><circle cx="5" cy="4.4" r="1.55" fill="#fff"/><path d="M11.9 1.5 L13.6 1.5 L19.5 8.1 L13.6 15.2 L11.9 15.2 L17.8 8.1 Z" fill="#000"/></svg>
<div class="r" style="left:27px;top:847px;width:1536px;height:1px;background:#e3e6ea;"></div>
<div class="t lt" style="left:41.55px;top:808.95px;font-size:14px;line-height:14px;color:#4e4e4e;font-weight:normal;">2698</div>
<div class="t lt" style="left:111.82px;top:809.15px;font-size:14px;line-height:14px;color:#5877ee;font-weight:normal;transform:scaleX(1.0265);transform-origin:0 0;">Design</div>
<div class="t lt" style="left:419.40px;top:804.95px;font-size:14px;line-height:14px;color:#999999;font-weight:normal;transform:scaleX(0.9831);transform-origin:0 0;">Agreed</div>
<div class="r" style="left:419px;top:824px;width:32px;height:8px;border:1px solid #dfe2e6;box-sizing:border-box;background:#5394db;"></div>
<div class="r" style="left:451px;top:824px;width:32px;height:8px;border:1px solid #dfe2e6;box-sizing:border-box;background:#5394db;"></div>
<div class="r" style="left:483px;top:824px;width:32px;height:8px;border:1px solid #dfe2e6;box-sizing:border-box;background:#5394db;"></div>
<div class="r" style="left:515px;top:824px;width:32px;height:8px;border:1px solid #dfe2e6;box-sizing:border-box;background:#fff;"></div>
<div class="r" style="left:547px;top:824px;width:33px;height:8px;border:1px solid #dfe2e6;box-sizing:border-box;background:#fff;"></div>
<div class="r" style="left:580px;top:824px;width:32px;height:8px;border:1px solid #dfe2e6;box-sizing:border-box;background:#fff;"></div>
<div class="r" style="left:612px;top:824px;width:32px;height:8px;border:1px solid #dfe2e6;box-sizing:border-box;background:#fff;"></div>
<div class="r" style="left:644px;top:824px;width:32px;height:8px;border:1px solid #dfe2e6;box-sizing:border-box;background:#fff;"></div>
<div class="r" style="left:676px;top:824px;width:32px;height:8px;border:1px solid #dfe2e6;box-sizing:border-box;background:#fff;"></div>
<div class="t lt" style="left:518.09px;width:600px;text-align:center;top:809.15px;font-size:14px;line-height:14px;color:#4e4e4e;font-weight:normal;">-</div>
<div class="t lt" style="left:683.82px;width:600px;text-align:center;top:809.15px;font-size:14px;line-height:14px;color:#4e4e4e;font-weight:normal;">2 849</div>
<div class="t lt" style="left:796.02px;width:600px;text-align:center;top:809.15px;font-size:14px;line-height:14px;color:#4e4e4e;font-weight:normal;">0</div>
<div class="t lt" style="left:896.02px;width:600px;text-align:center;top:809.15px;font-size:14px;line-height:14px;color:#4e4e4e;font-weight:normal;">2 849</div>
<svg class="r" style="left:1278px;top:807.5px" width="18" height="18" viewBox="0 0 18 18"><circle cx="8.7" cy="7.9" r="5.9" fill="none" stroke="#3fc24f" stroke-width="1.25"/><path d="M5.4 8.3 L7.6 10.5 L12 6" fill="none" stroke="#3fc24f" stroke-width="1.45"/></svg>
<div class="t lt" style="left:1334.60px;top:799.15px;font-size:14px;line-height:14px;color:#68a9e8;font-weight:normal;transform:scaleX(1.0000);transform-origin:0 0;">budget: 10,000</div>
<div class="t lt" style="left:1334.60px;top:820.05px;font-size:14px;line-height:14px;color:#5cc464;font-weight:normal;transform:scaleX(1.0000);transform-origin:0 0;">balance: 10,000</div>
<svg class="r" style="left:1521px;top:808.5px" width="22" height="17" viewBox="0 0 22 17"><path d="M1.9 2.1 Q1.9 1.5 2.5 1.5 L9.5 1.5 L15.2 7.5 Q15.6 8.1 15.2 8.6 L9.5 14.8 Q9 15.2 8.5 14.8 L2.3 9.2 Q1.9 8.9 1.9 8.4 Z" fill="#000"/><circle cx="5" cy="4.4" r="1.55" fill="#fff"/><path d="M11.9 1.5 L13.6 1.5 L19.5 8.1 L13.6 15.2 L11.9 15.2 L17.8 8.1 Z" fill="#000"/></svg>
<div class="r" style="left:27px;top:908px;width:1536px;height:1px;background:#e3e6ea;"></div>
<div class="t lt" style="left:41.55px;top:869.95px;font-size:14px;line-height:14px;color:#4e4e4e;font-weight:normal;">2990</div>
<div class="t lt" style="left:111.84px;top:870.15px;font-size:14px;line-height:14px;color:#5877ee;font-weight:normal;transform:scaleX(1.0079);transform-origin:0 0;">Business Consulting Services</div>
<div class="t lt" style="left:418.63px;top:865.95px;font-size:14px;line-height:14px;color:#999999;font-weight:normal;transform:scaleX(1.0227);transform-origin:0 0;">Completed</div>
<div class="r" style="left:419px;top:884px;width:32px;height:8px;border:1px solid #dfe2e6;box-sizing:border-box;background:#5394db;"></div>
<div class="r" style="left:451px;top:884px;width:32px;height:8px;border:1px solid #dfe2e6;box-sizing:border-box;background:#5394db;"></div>
<div class="r" style="left:483px;top:884px;width:32px;height:8px;border:1px solid #dfe2e6;box-sizing:border-box;background:#5394db;"></div>
<div class="r" style="left:515px;top:884px;width:32px;height:8px;border:1px solid #dfe2e6;box-sizing:border-box;background:#5394db;"></div>
<div class="r" style="left:547px;top:884px;width:33px;height:8px;border:1px solid #dfe2e6;box-sizing:border-box;background:#5394db;"></div>
<div class="r" style="left:580px;top:884px;width:32px;height:8px;border:1px solid #dfe2e6;box-sizing:border-box;background:#5394db;"></div>
<div class="r" style="left:612px;top:884px;width:32px;height:8px;border:1px solid #dfe2e6;box-sizing:border-box;background:#5394db;"></div>
<div class="r" style="left:644px;top:884px;width:32px;height:8px;border:1px solid #dfe2e6;box-sizing:border-box;background:#5394db;"></div>
<div class="r" style="left:676px;top:884px;width:32px;height:8px;border:1px solid #dfe2e6;box-sizing:border-box;background:#fff;"></div>
<div class="t lt" style="left:518.09px;width:600px;text-align:center;top:870.15px;font-size:14px;line-height:14px;color:#4e4e4e;font-weight:normal;">-</div>
<div class="t lt" style="left:683.60px;width:600px;text-align:center;top:870.15px;font-size:14px;line-height:14px;color:#4e4e4e;font-weight:normal;">100 000</div>
<div class="t lt" style="left:795.91px;width:600px;text-align:center;top:870.15px;font-size:14px;line-height:14px;color:#4e4e4e;font-weight:normal;">50 000</div>
<div class="t lt" style="left:895.91px;width:600px;text-align:center;top:870.15px;font-size:14px;line-height:14px;color:#4e4e4e;font-weight:normal;">50 000</div>
<svg class="r" style="left:1278px;top:868.5px" width="18" height="18" viewBox="0 0 18 18"><circle cx="8.7" cy="7.9" r="5.9" fill="none" stroke="#3fc24f" stroke-width="1.25"/><path d="M5.4 8.3 L7.6 10.5 L12 6" fill="none" stroke="#3fc24f" stroke-width="1.45"/></svg>
<div class="t lt" style="left:1334.60px;top:860.15px;font-size:14px;line-height:14px;color:#68a9e8;font-weight:normal;transform:scaleX(1.0000);transform-origin:0 0;">budget: 50,000</div>
<div class="t lt" style="left:1334.60px;top:881.05px;font-size:14px;line-height:14px;color:#ef5468;font-weight:normal;transform:scaleX(1.0000);transform-origin:0 0;">balance: 0</div>
<svg class="r" style="left:1521px;top:869.5px" width="22" height="17" viewBox="0 0 22 17"><path d="M1.9 2.1 Q1.9 1.5 2.5 1.5 L9.5 1.5 L15.2 7.5 Q15.6 8.1 15.2 8.6 L9.5 14.8 Q9 15.2 8.5 14.8 L2.3 9.2 Q1.9 8.9 1.9 8.4 Z" fill="#000"/><circle cx="5" cy="4.4" r="1.55" fill="#fff"/><path d="M11.9 1.5 L13.6 1.5 L19.5 8.1 L13.6 15.2 L11.9 15.2 L17.8 8.1 Z" fill="#000"/></svg>
<div class="r" style="left:27px;top:969px;width:1536px;height:1px;background:#e3e6ea;"></div>
<div class="t lt" style="left:41.80px;top:930.95px;font-size:14px;line-height:14px;color:#4e4e4e;font-weight:normal;">3386</div>
<div class="t lt" style="left:111.84px;top:931.15px;font-size:14px;line-height:14px;color:#5877ee;font-weight:normal;transform:scaleX(1.0079);transform-origin:0 0;">Business Consulting Services</div>
<div class="t lt" style="left:418.12px;top:926.95px;font-size:14px;line-height:14px;color:#999999;font-weight:normal;transform:scaleX(1.0207);transform-origin:0 0;">Requirements gathering</div>
<div class="r" style="left:419px;top:946px;width:32px;height:8px;border:1px solid #dfe2e6;box-sizing:border-box;background:#8e40b0;"></div>
<div class="r" style="left:451px;top:946px;width:32px;height:8px;border:1px solid #dfe2e6;box-sizing:border-box;background:#fff;"></div>
<div class="r" style="left:483px;top:946px;width:32px;height:8px;border:1px solid #dfe2e6;box-sizing:border-box;background:#fff;"></div>
<div class="r" style="left:515px;top:946px;width:32px;height:8px;border:1px solid #dfe2e6;box-sizing:border-box;background:#fff;"></div>
<div class="r" style="left:547px;top:946px;width:33px;height:8px;border:1px solid #dfe2e6;box-sizing:border-box;background:#fff;"></div>
<div class="r" style="left:580px;top:946px;width:32px;height:8px;border:1px solid #dfe2e6;box-sizing:border-box;background:#fff;"></div>
<div class="r" style="left:612px;top:946px;width:32px;height:8px;border:1px solid #dfe2e6;box-sizing:border-box;background:#fff;"></div>
<div class="r" style="left:644px;top:946px;width:32px;height:8px;border:1px solid #dfe2e6;box-sizing:border-box;background:#fff;"></div>
<div class="r" style="left:676px;top:946px;width:32px;height:8px;border:1px solid #dfe2e6;box-sizing:border-box;background:#fff;"></div>
<div class="t lt" style="left:518.09px;width:600px;text-align:center;top:931.15px;font-size:14px;line-height:14px;color:#4e4e4e;font-weight:normal;">-</div>
<div class="t lt" style="left:683.82px;width:600px;text-align:center;top:931.15px;font-size:14px;line-height:14px;color:#4e4e4e;font-weight:normal;">0</div>
<div class="t lt" style="left:796.02px;width:600px;text-align:center;top:931.15px;font-size:14px;line-height:14px;color:#4e4e4e;font-weight:normal;">0</div>
<div class="t lt" style="left:896.02px;width:600px;text-align:center;top:931.15px;font-size:14px;line-height:14px;color:#4e4e4e;font-weight:normal;">0</div>
<svg class="r" style="left:1278px;top:929.5px" width="18" height="18" viewBox="0 0 18 18"><circle cx="8.7" cy="7.9" r="5.9" fill="none" stroke="#3fc24f" stroke-width="1.25"/><path d="M5.4 8.3 L7.6 10.5 L12 6" fill="none" stroke="#3fc24f" stroke-width="1.45"/></svg>
<div class="t lt" style="left:1334.60px;top:921.15px;font-size:14px;line-height:14px;color:#68a9e8;font-weight:normal;transform:scaleX(1.0000);transform-origin:0 0;">budget: 5,000</div>
<div class="t lt" style="left:1334.60px;top:942.05px;font-size:14px;line-height:14px;color:#5cc464;font-weight:normal;transform:scaleX(1.0000);transform-origin:0 0;">balance: 5,000</div>
<svg class="r" style="left:1521px;top:930.5px" width="22" height="17" viewBox="0 0 22 17"><path d="M1.9 2.1 Q1.9 1.5 2.5 1.5 L9.5 1.5 L15.2 7.5 Q15.6 8.1 15.2 8.6 L9.5 14.8 Q9 15.2 8.5 14.8 L2.3 9.2 Q1.9 8.9 1.9 8.4 Z" fill="#000"/><circle cx="5" cy="4.4" r="1.55" fill="#fff"/><path d="M11.9 1.5 L13.6 1.5 L19.5 8.1 L13.6 15.2 L11.9 15.2 L17.8 8.1 Z" fill="#000"/></svg>
<div class="r" style="left:27px;top:969px;width:1536px;height:1px;background:#e3e6ea;"></div>
</body></html>
